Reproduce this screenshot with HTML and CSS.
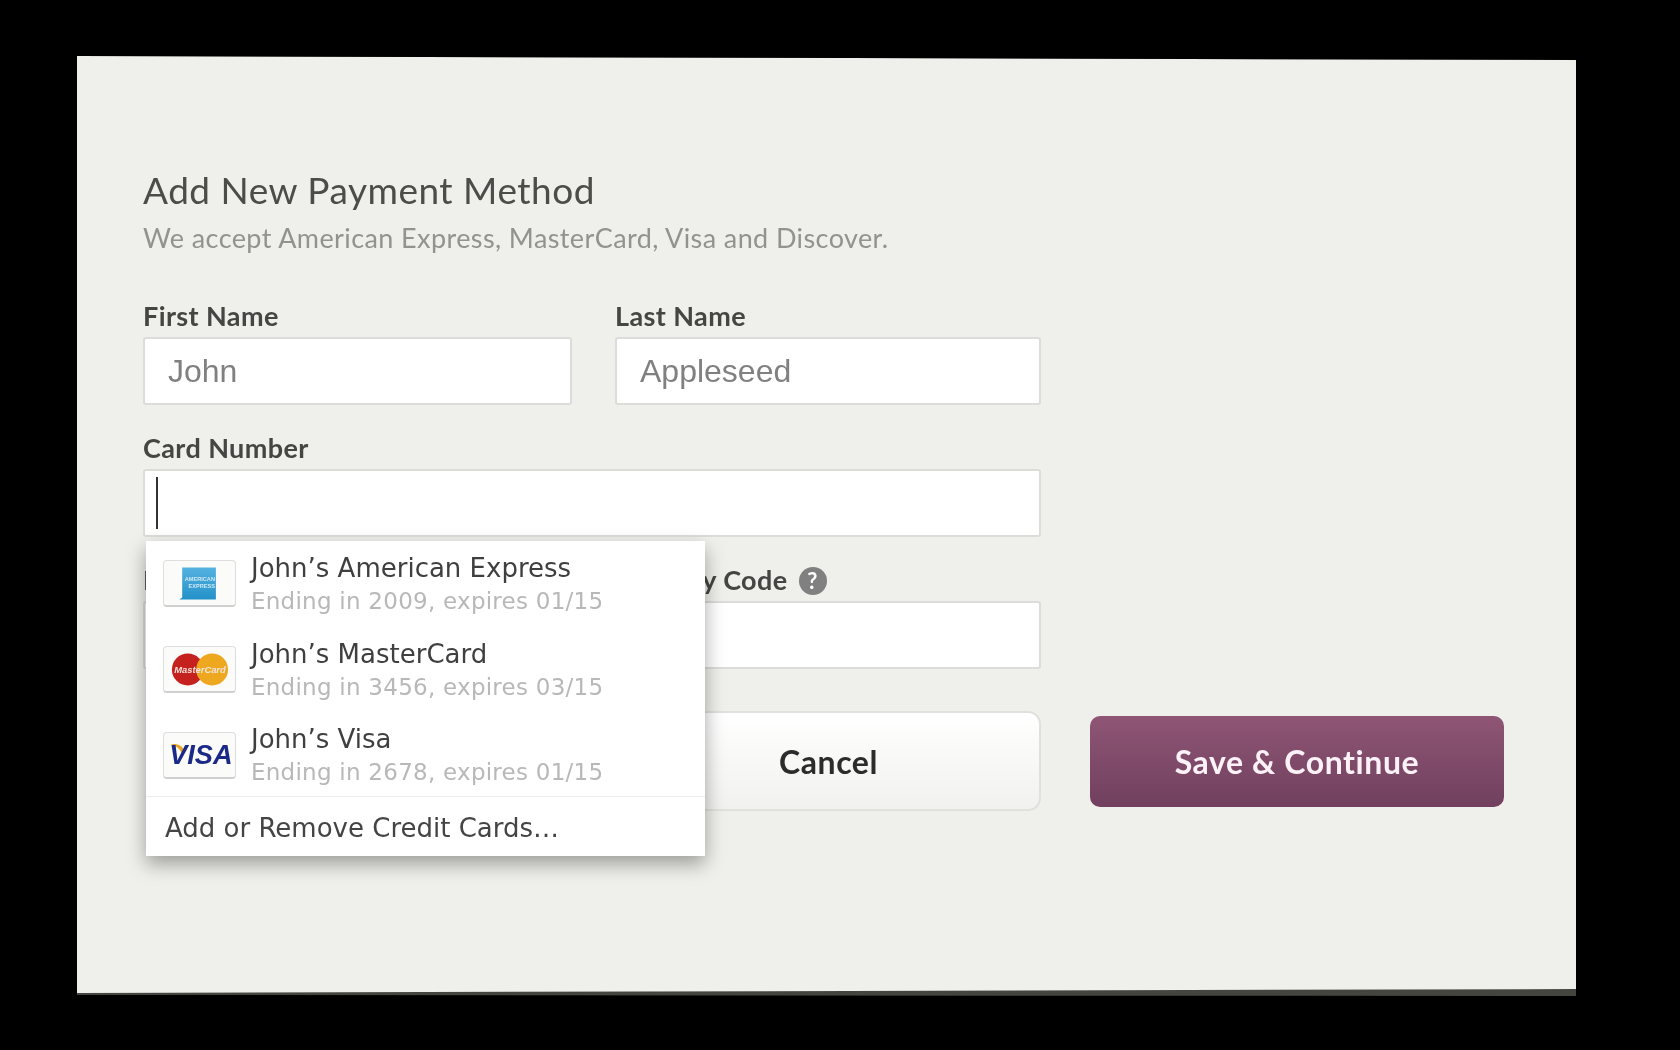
FILE: index.html
```html
<!DOCTYPE html>
<html lang="en">

<head>
    <meta charset="UTF-8">
    <title>Add New Payment Method</title>
    <link rel="stylesheet" href="styles.css">
</head>

<body>
    <div class="bezel">
        <div class="screen">
            <h1 class="title">Add New Payment Method</h1>
            <p class="subtitle">We accept American Express, MasterCard, Visa and Discover.</p>

            <div class="form-grid">
                <div class="field">
                    <label class="field-label">First Name</label>
                    <div class="input">John</div>
                </div>
                <div class="field">
                    <label class="field-label">Last Name</label>
                    <div class="input">Appleseed</div>
                </div>
                <div class="field field-wide">
                    <label class="field-label">Card Number</label>
                    <div class="input input-focus"><span class="caret"></span></div>

                    <div class="autofill">
                        <div class="card-row">
                            <svg class="card-icon" viewBox="0 0 73 47">
                                <defs>
                                    <linearGradient id="amexBlue" x1="0" y1="0" x2="0" y2="1">
                                        <stop offset="0" stop-color="#55b2e0" />
                                        <stop offset="1" stop-color="#2391c8" />
                                    </linearGradient>
                                </defs>
                                <path d="M18 7h36v34H15l3-2z" fill="url(#amexBlue)" />
                                <text class="amex-text" x="53" y="21" text-anchor="end">AMERICAN</text>
                                <text class="amex-text" x="53" y="29" text-anchor="end">EXPRESS</text>
                            </svg>
                            <div class="card-text">
                                <div class="card-name">John’s American Express</div>
                                <div class="card-detail">Ending in 2009, expires 01/15</div>
                            </div>
                        </div>
                        <div class="card-row">
                            <svg class="card-icon" viewBox="0 0 73 47">
                                <circle cx="24" cy="24" r="17" fill="#c5221f" />
                                <circle cx="50" cy="24" r="17" fill="#eea820" />
                                <text class="mc-text" x="37" y="28" text-anchor="middle">MasterCard</text>
                            </svg>
                            <div class="card-text">
                                <div class="card-name">John’s MasterCard</div>
                                <div class="card-detail">Ending in 3456, expires 03/15</div>
                            </div>
                        </div>
                        <div class="card-row">
                            <svg class="card-icon" viewBox="0 0 73 47">
                                <path d="M6 12c7-1 12 1 15 8l-3 3c-2-6-6-9-12-11z" fill="#e8a526" />
                                <text class="visa-text" x="38" y="33" text-anchor="middle">VISA</text>
                            </svg>
                            <div class="card-text">
                                <div class="card-name">John’s Visa</div>
                                <div class="card-detail">Ending in 2678, expires 01/15</div>
                            </div>
                        </div>
                        <div class="autofill-footer">Add or Remove Credit Cards…</div>
                    </div>
                </div>
                <div class="field">
                    <label class="field-label">Expiration Date</label>
                    <div class="input"></div>
                </div>
                <div class="field">
                    <label class="field-label">Security Code <span class="help">?</span></label>
                    <div class="input"></div>
                </div>
            </div>

            <div class="actions">
                <button class="btn btn-cancel">Cancel</button>
                <button class="btn btn-save">Save &amp; Continue</button>
            </div>
        </div>
    </div>
</body>

</html>
```

FILE: styles.css
```css
* {
    box-sizing: border-box;
}

body {
    margin: 0;
    height: 1050px;
    overflow: hidden;
    background-color: #000;
    font-family: Lato, "Open Sans", sans-serif;
}

.bezel {
    width: 1499px;
    height: 940px;
    margin: 56px 0 0 77px;
    background: #45453f;
    clip-path: polygon(0 0, 100% 4px, 100% 100%, 0 939px);
}

.screen {
    height: 100%;
    padding: 112px 0 0 66px;
    background: #efefeb;
    clip-path: polygon(0 0, 100% 4px, 100% 933px, 0 937px);
    filter: blur(0.5px);
}

.title {
    margin: 0;
    font-size: 37px;
    line-height: 44px;
    font-weight: 400;
    letter-spacing: 0.5px;
    color: #4c4c4a;
}

.subtitle {
    margin: 8px 0 0;
    font-size: 27px;
    line-height: 36px;
    letter-spacing: 0.4px;
    color: #929290;
}

.form-grid {
    display: grid;
    grid-template-columns: 429px 426px;
    column-gap: 43px;
    row-gap: 28px;
    margin-top: 45px;
}

.field {
    position: relative;
}

.field-wide {
    grid-column: 1 / 3;
}

.field-label {
    display: block;
    height: 36px;
    font-size: 27px;
    line-height: 30px;
    font-weight: 700;
    letter-spacing: 0.4px;
    color: #454543;
}

.input {
    display: flex;
    align-items: center;
    height: 68px;
    padding-left: 23px;
    background: #fff;
    border: 2px solid #dcdcd9;
    border-radius: 3px;
    font-family: "Liberation Sans", Arial, sans-serif;
    font-size: 32px;
    color: #808080;
}

.input-focus {
    padding-left: 11px;
}

.caret {
    width: 2px;
    height: 52px;
    background: #333;
}

.help {
    display: inline-block;
    width: 28px;
    height: 28px;
    margin-left: 4px;
    border-radius: 50%;
    background: #808080;
    color: #fff;
    font-size: 22px;
    line-height: 28px;
    text-align: center;
    vertical-align: 1px;
}

/* dropdown over the card number field */
.autofill {
    position: absolute;
    top: 108px;
    left: 3px;
    z-index: 2;
    width: 559px;
    height: 315px;
    padding-top: 10px;
    background: #fff;
    box-shadow: 0 8px 18px rgba(0, 0, 0, 0.35);
    font-family: "DejaVu Sans", sans-serif;
}

.card-row {
    display: flex;
    align-items: center;
    height: 85.7px;
    padding-left: 17px;
}

.card-icon {
    flex: none;
    width: 73px;
    height: 47px;
    margin-bottom: 20px;
    background: #fbfbfa;
    border: 1px solid #dedede;
    border-bottom: 2px solid #cfcfcf;
    border-radius: 4px;
}

.amex-text {
    font-family: "Liberation Sans", sans-serif;
    font-size: 6px;
    font-weight: 700;
    fill: #cfe8f4;
}

.mc-text {
    font-family: "Liberation Sans", sans-serif;
    font-size: 10px;
    font-weight: 700;
    font-style: italic;
    fill: #f3e4dc;
}

.visa-text {
    font-family: "Liberation Sans", sans-serif;
    font-size: 29px;
    font-weight: 700;
    font-style: italic;
    fill: #1b2a86;
}

.card-text {
    margin: -18px 0 0 15px;
}

.card-name {
    font-size: 26px;
    line-height: 32px;
    color: #3f3f3f;
}

.card-detail {
    font-size: 23px;
    line-height: 34px;
    letter-spacing: 0.25px;
    color: #b8b8b8;
}

.autofill-footer {
    margin-top: -12px;
    padding: 15px 0 0 19px;
    border-top: 1px solid #ececec;
    font-size: 26px;
    line-height: 32px;
    color: #444;
}

.actions {
    display: flex;
    align-items: center;
    margin: 42px 0 0 473px;
    gap: 49px;
}

.btn {
    font-family: Lato, "Open Sans", sans-serif;
    font-size: 32px;
    font-weight: 700;
    letter-spacing: 0.6px;
    cursor: pointer;
}

.btn-cancel {
    width: 425px;
    height: 100px;
    background: linear-gradient(#fff, #f1f1ef);
    border: 2px solid #e0e0dc;
    border-radius: 13px;
    color: #2c2c2c;
}

.btn-save {
    width: 414px;
    height: 91px;
    background: linear-gradient(#8f5575, #70405e);
    border: none;
    border-radius: 10px;
    color: #fbf1f6;
}
```
